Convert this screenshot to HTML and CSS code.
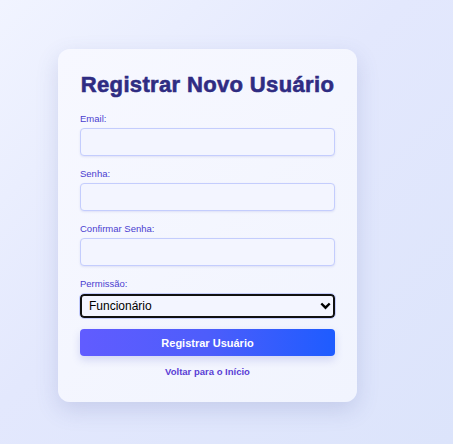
FILE: index.html
```html
<!DOCTYPE html>
<html lang="pt-BR">
<head>
<meta charset="utf-8">
<title>Registrar Novo Usuário</title>
<link rel="stylesheet" href="styles.css">
</head>
<body>
  <main class="card">
    <h1 class="title">Registrar Novo Usuário</h1>
    <form class="form">
      <div class="field">
        <label class="label" for="email">Email:</label>
        <input class="input" id="email" type="email">
      </div>
      <div class="field">
        <label class="label" for="senha">Senha:</label>
        <input class="input" id="senha" type="password">
      </div>
      <div class="field">
        <label class="label" for="confirmar">Confirmar Senha:</label>
        <input class="input" id="confirmar" type="password">
      </div>
      <div class="field">
        <label class="label" for="perm">Permissão:</label>
        <div class="select-wrap">
          <select class="select" id="perm">
            <option>Funcionário</option>
          </select>
          <svg class="chev" width="11" height="8" viewBox="0 0 11 8"><path d="M1.3 1.5 L5.5 5.7 L9.7 1.5" fill="none" stroke="#000" stroke-width="2.4"/></svg>
        </div>
      </div>
      <button class="btn" type="button">Registrar Usuário</button>
    </form>
    <a class="back" href="#">Voltar para o Início</a>
  </main>
</body>
</html>
```
FILE: styles.css
```css
* { box-sizing: border-box; }
html, body { height: 100%; }
body {
  margin: 0;
  font-family: "Liberation Sans", Arial, sans-serif;
  background: linear-gradient(135deg, #f1f4ff 0%, #e3e8fd 45%, #dce4fb 100%);
  display: flex;
  align-items: center;
  justify-content: center;
  padding-right: 38px;
}
.card {
  width: 299px;
  background: linear-gradient(135deg, #f7f8ff 0%, #f1f4fe 100%);
  border-radius: 12px;
  padding: 21px 22px 25px 22px;
  box-shadow: 0 8px 22px rgba(80, 90, 160, 0.18);
  margin-top: 7px;
}
.title {
  margin: 0 0 13px 0;
  font-size: 22px;
  font-weight: 700;
  color: #2f2c82;
  -webkit-text-stroke: 0.6px #2f2c82;
  letter-spacing: 0.35px;
  text-align: center;
  line-height: 30px;
}
.form { display: flex; flex-direction: column; }
.field { display: flex; flex-direction: column; margin-bottom: 12px; }
.label {
  font-size: 9.5px;
  color: #4a3dd0;
  margin-bottom: 4px;
  line-height: 11px;
}
.input {
  height: 28px;
  border: 1px solid #c4cdfd;
  border-radius: 4px;
  background: #f3f5ff;
  box-shadow: 0 1px 2px rgba(100, 110, 200, 0.15);
}
.select-wrap { position: relative; margin-top: 1px; }
.select {
  display: block;
  width: 100%;
  height: 24px;
  appearance: none;
  -webkit-appearance: none;
  border: 2px solid #111;
  border-radius: 4px;
  background: #f3f5ff;
  outline: 1px solid #c4cdfd;
  font-family: "Liberation Sans", Arial, sans-serif;
  font-size: 12px;
  color: #000;
  padding: 0 0 0 7px;
}
.chev { position: absolute; right: 4px; top: 8px; }
.btn {
  height: 27px;
  border: none;
  border-radius: 4px;
  background: linear-gradient(90deg, #615cff 0%, #4d5dfb 50%, #1e5cff 100%);
  color: #fff;
  font-family: "Liberation Sans", Arial, sans-serif;
  font-weight: 700;
  font-size: 11px;
  box-shadow: 0 4px 8px rgba(80, 90, 200, 0.2);
  margin-top: -1px;
}
.back {
  display: block;
  text-align: center;
  margin-top: 10px;
  font-size: 9.5px;
  line-height: 11px;
  font-weight: 700;
  color: #5a3fd5;
  text-decoration: none;
}
```
